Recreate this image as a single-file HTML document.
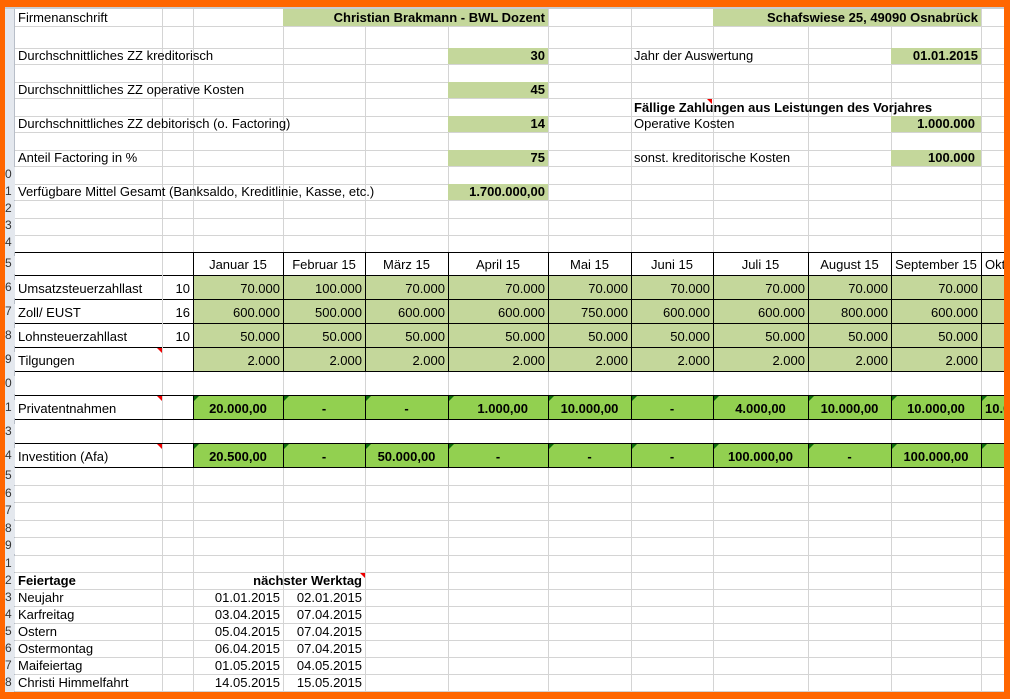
<!DOCTYPE html>
<html><head><meta charset="utf-8"><style>
*{margin:0;padding:0;box-sizing:border-box}
body{width:1010px;height:699px;overflow:hidden;background:#fff;position:relative;font-family:"Liberation Sans",Arial,sans-serif;font-size:13px;color:#000}
.v{position:absolute;width:1px;background:#d4d4d4;top:9px;height:683px}
.h{position:absolute;height:1px;background:#d4d4d4;left:15px;width:990px}
.bh{position:absolute;height:1px;background:#000;left:15px;width:990px}
.bv{position:absolute;width:1px;background:#000}
.c{position:absolute;white-space:nowrap;overflow:hidden;padding:0 3px;display:flex;align-items:flex-end;padding-bottom:1px}
.r{justify-content:flex-end}
.m{justify-content:center}
.b{font-weight:bold}
.g{background:#c4d79b}
.gg{background:#92d050}
.rn{position:absolute;left:5px;width:10px;background:#e4e8ee;font-size:12px;color:#333;overflow:hidden;text-align:left;padding-left:0}
.red{position:absolute;width:0;height:0;border-top:5px solid #e00;border-left:5px solid transparent}
.grn{position:absolute;width:0;height:0;border-top:5px solid #0a6a0a;border-right:5px solid transparent}
.o{position:absolute;background:#ff6600}
</style></head><body>
<!-- row header column -->
<div style="position:absolute;left:5px;top:7px;width:10px;height:686px;background:#e4e8ee;border-right:1px solid #b8bec8"></div>
<div style="position:absolute;left:5px;top:7px;width:1000px;height:2px;background:#c8ccd2"></div>
<!-- vertical gridlines -->
<div class="v" style="left:162px"></div><div class="v" style="left:193px"></div><div class="v" style="left:283px"></div><div class="v" style="left:365px"></div><div class="v" style="left:448px"></div><div class="v" style="left:548px"></div><div class="v" style="left:631px"></div><div class="v" style="left:713px"></div><div class="v" style="left:808px"></div><div class="v" style="left:891px"></div><div class="v" style="left:981px"></div>
<!-- horizontal gridlines -->
<div class="h" style="top:26px"></div><div class="h" style="top:48px"></div><div class="h" style="top:64px"></div><div class="h" style="top:82px"></div><div class="h" style="top:98px"></div><div class="h" style="top:116px"></div><div class="h" style="top:132px"></div><div class="h" style="top:150px"></div><div class="h" style="top:166px"></div><div class="h" style="top:184px"></div><div class="h" style="top:200px"></div><div class="h" style="top:218px"></div><div class="h" style="top:235px"></div><div class="h" style="top:485px"></div><div class="h" style="top:502px"></div><div class="h" style="top:520px"></div><div class="h" style="top:537px"></div><div class="h" style="top:555px"></div><div class="h" style="top:572px"></div><div class="h" style="top:589px"></div><div class="h" style="top:606px"></div><div class="h" style="top:623px"></div><div class="h" style="top:640px"></div><div class="h" style="top:657px"></div><div class="h" style="top:674px"></div><div class="h" style="top:691px"></div>

<!-- row numbers -->
<div class="rn" style="top:167px;height:17px">0</div><div class="rn" style="top:184px;height:16px">1</div><div class="rn" style="top:201px;height:17px">2</div><div class="rn" style="top:218px;height:17px">3</div><div class="rn" style="top:235px;height:17px">4</div>
<div class="rn" style="top:256px;height:18px">5</div><div class="rn" style="top:280px;height:18px">6</div><div class="rn" style="top:304px;height:18px">7</div><div class="rn" style="top:328px;height:18px">8</div><div class="rn" style="top:352px;height:18px">9</div><div class="rn" style="top:376px;height:18px">0</div><div class="rn" style="top:400px;height:18px">1</div><div class="rn" style="top:424px;height:18px">3</div><div class="rn" style="top:448px;height:18px">4</div>
<div class="rn" style="top:468px;height:17px">5</div><div class="rn" style="top:486px;height:16px">6</div><div class="rn" style="top:503px;height:16px">7</div><div class="rn" style="top:521px;height:16px">8</div><div class="rn" style="top:538px;height:16px">9</div><div class="rn" style="top:556px;height:16px">1</div><div class="rn" style="top:573px;height:16px">2</div><div class="rn" style="top:590px;height:16px">3</div><div class="rn" style="top:607px;height:16px">4</div><div class="rn" style="top:624px;height:16px">5</div><div class="rn" style="top:641px;height:16px">6</div><div class="rn" style="top:658px;height:16px">7</div><div class="rn" style="top:675px;height:16px">8</div>

<!-- top section -->
<div class="c" style="left:15px;top:9px;width:200px;height:17px">Firmenanschrift</div>
<div class="c g r b" style="left:283px;top:9px;width:265px;height:17px">Christian Brakmann - BWL Dozent</div>
<div class="c g r b" style="left:713px;top:9px;width:268px;height:17px">Schafswiese 25, 49090 Osnabrück</div>

<div class="c" style="left:15px;top:48px;width:300px;height:16px">Durchschnittliches ZZ kreditorisch</div>
<div class="c g r b" style="left:448px;top:48px;width:100px;height:16px">30</div>
<div class="c" style="left:631px;top:48px;width:200px;height:16px">Jahr der Auswertung</div>
<div class="c g r b" style="left:891px;top:48px;width:90px;height:16px">01.01.2015</div>

<div class="c" style="left:15px;top:82px;width:300px;height:16px">Durchschnittliches ZZ operative Kosten</div>
<div class="c g r b" style="left:448px;top:82px;width:100px;height:16px">45</div>
<div class="c b" style="left:631px;top:98px;width:350px;height:18px">Fällige Zahlungen aus Leistungen des Vorjahres</div>
<div class="red" style="left:707px;top:99px"></div>

<div class="c" style="left:15px;top:116px;width:340px;height:16px">Durchschnittliches ZZ debitorisch (o. Factoring)</div>
<div class="c g r b" style="left:448px;top:116px;width:100px;height:16px">14</div>
<div class="c" style="left:631px;top:116px;width:200px;height:16px">Operative Kosten</div>
<div class="c g r b" style="left:891px;top:116px;width:90px;height:16px;padding-right:6px">1.000.000</div>

<div class="c" style="left:15px;top:150px;width:300px;height:16px">Anteil Factoring in %</div>
<div class="c g r b" style="left:448px;top:150px;width:100px;height:16px">75</div>
<div class="c" style="left:631px;top:150px;width:250px;height:16px">sonst. kreditorische Kosten</div>
<div class="c g r b" style="left:891px;top:150px;width:90px;height:16px;padding-right:6px">100.000</div>

<div class="c" style="left:15px;top:184px;width:433px;height:16px">Verfügbare Mittel Gesamt (Banksaldo, Kreditlinie, Kasse, etc.)</div>
<div class="c g r b" style="left:448px;top:184px;width:100px;height:16px">1.700.000,00</div>

<!-- green fills table -->
<div class="g" style="position:absolute;left:193px;top:275px;width:812px;height:96px"></div>
<div class="gg" style="position:absolute;left:193px;top:395px;width:812px;height:24px"></div>
<div class="gg" style="position:absolute;left:193px;top:443px;width:812px;height:24px"></div>
<div style="position:absolute;left:15px;top:371px;width:990px;height:24px;background:#fff"></div>
<div style="position:absolute;left:15px;top:419px;width:990px;height:24px;background:#fff"></div>
<div style="position:absolute;left:15px;top:252px;width:178px;height:0"></div>
<div class="v" style="left:162px;top:371px;height:24px"></div><div class="v" style="left:193px;top:371px;height:24px"></div><div class="v" style="left:283px;top:371px;height:24px"></div><div class="v" style="left:365px;top:371px;height:24px"></div><div class="v" style="left:448px;top:371px;height:24px"></div><div class="v" style="left:548px;top:371px;height:24px"></div><div class="v" style="left:631px;top:371px;height:24px"></div><div class="v" style="left:713px;top:371px;height:24px"></div><div class="v" style="left:808px;top:371px;height:24px"></div><div class="v" style="left:891px;top:371px;height:24px"></div><div class="v" style="left:981px;top:371px;height:24px"></div>
<div class="v" style="left:162px;top:419px;height:24px"></div><div class="v" style="left:193px;top:419px;height:24px"></div><div class="v" style="left:283px;top:419px;height:24px"></div><div class="v" style="left:365px;top:419px;height:24px"></div><div class="v" style="left:448px;top:419px;height:24px"></div><div class="v" style="left:548px;top:419px;height:24px"></div><div class="v" style="left:631px;top:419px;height:24px"></div><div class="v" style="left:713px;top:419px;height:24px"></div><div class="v" style="left:808px;top:419px;height:24px"></div><div class="v" style="left:891px;top:419px;height:24px"></div><div class="v" style="left:981px;top:419px;height:24px"></div>
<div style="position:absolute;left:16px;top:253px;width:177px;height:22px;background:#fff"></div>
<!-- black lines -->
<div class="bh" style="top:252px"></div><div class="bh" style="top:275px"></div><div class="bh" style="top:299px"></div><div class="bh" style="top:323px"></div><div class="bh" style="top:347px"></div><div class="bh" style="top:371px"></div><div class="bh" style="top:395px"></div><div class="bh" style="top:419px"></div><div class="bh" style="top:443px"></div><div class="bh" style="top:467px"></div>
<div class="bv" style="left:193px;top:252px;height:119px"></div><div class="bv" style="left:283px;top:252px;height:119px"></div><div class="bv" style="left:365px;top:252px;height:119px"></div><div class="bv" style="left:448px;top:252px;height:119px"></div><div class="bv" style="left:548px;top:252px;height:119px"></div><div class="bv" style="left:631px;top:252px;height:119px"></div><div class="bv" style="left:713px;top:252px;height:119px"></div><div class="bv" style="left:808px;top:252px;height:119px"></div><div class="bv" style="left:891px;top:252px;height:119px"></div><div class="bv" style="left:981px;top:252px;height:119px"></div>
<div class="bv" style="left:193px;top:395px;height:24px"></div><div class="bv" style="left:283px;top:395px;height:24px"></div><div class="bv" style="left:365px;top:395px;height:24px"></div><div class="bv" style="left:448px;top:395px;height:24px"></div><div class="bv" style="left:548px;top:395px;height:24px"></div><div class="bv" style="left:631px;top:395px;height:24px"></div><div class="bv" style="left:713px;top:395px;height:24px"></div><div class="bv" style="left:808px;top:395px;height:24px"></div><div class="bv" style="left:891px;top:395px;height:24px"></div><div class="bv" style="left:981px;top:395px;height:24px"></div>
<div class="bv" style="left:193px;top:443px;height:24px"></div><div class="bv" style="left:283px;top:443px;height:24px"></div><div class="bv" style="left:365px;top:443px;height:24px"></div><div class="bv" style="left:448px;top:443px;height:24px"></div><div class="bv" style="left:548px;top:443px;height:24px"></div><div class="bv" style="left:631px;top:443px;height:24px"></div><div class="bv" style="left:713px;top:443px;height:24px"></div><div class="bv" style="left:808px;top:443px;height:24px"></div><div class="bv" style="left:891px;top:443px;height:24px"></div><div class="bv" style="left:981px;top:443px;height:24px"></div>
<div class="v" style="left:162px;top:253px;height:118px"></div>

<!-- header months -->
<div class="c m" style="left:193px;top:253px;width:90px;height:22px;padding-bottom:3px">Januar 15</div>
<div class="c m" style="left:283px;top:253px;width:82px;height:22px;padding-bottom:3px">Februar 15</div>
<div class="c m" style="left:365px;top:253px;width:83px;height:22px;padding-bottom:3px">März 15</div>
<div class="c m" style="left:448px;top:253px;width:100px;height:22px;padding-bottom:3px">April 15</div>
<div class="c m" style="left:548px;top:253px;width:83px;height:22px;padding-bottom:3px">Mai 15</div>
<div class="c m" style="left:631px;top:253px;width:82px;height:22px;padding-bottom:3px">Juni 15</div>
<div class="c m" style="left:713px;top:253px;width:95px;height:22px;padding-bottom:3px">Juli 15</div>
<div class="c m" style="left:808px;top:253px;width:83px;height:22px;padding-bottom:3px">August 15</div>
<div class="c m" style="left:891px;top:253px;width:90px;height:22px;padding-bottom:3px">September 15</div>
<div class="c" style="left:982px;top:253px;width:22px;height:22px;padding-bottom:3px">Oktober</div>

<!-- data rows -->
<div class="c" style="left:15px;top:276px;width:147px;height:23px;padding-bottom:3px">Umsatzsteuerzahllast</div><div class="c r" style="left:162px;top:276px;width:31px;height:23px;padding-bottom:3px">10</div>
<div class="c" style="left:15px;top:300px;width:147px;height:23px;padding-bottom:3px">Zoll/ EUST</div><div class="c r" style="left:162px;top:300px;width:31px;height:23px;padding-bottom:3px">16</div>
<div class="c" style="left:15px;top:324px;width:147px;height:23px;padding-bottom:3px">Lohnsteuerzahllast</div><div class="c r" style="left:162px;top:324px;width:31px;height:23px;padding-bottom:3px">10</div>
<div class="c" style="left:15px;top:348px;width:147px;height:23px;padding-bottom:3px">Tilgungen</div>
<div class="red" style="left:157px;top:348px"></div>

<div class="c r" style="left:193px;top:276px;width:90px;height:23px;padding-bottom:3px">70.000</div><div class="c r" style="left:283px;top:276px;width:82px;height:23px;padding-bottom:3px">100.000</div><div class="c r" style="left:365px;top:276px;width:83px;height:23px;padding-bottom:3px">70.000</div><div class="c r" style="left:448px;top:276px;width:100px;height:23px;padding-bottom:3px">70.000</div><div class="c r" style="left:548px;top:276px;width:83px;height:23px;padding-bottom:3px">70.000</div><div class="c r" style="left:631px;top:276px;width:82px;height:23px;padding-bottom:3px">70.000</div><div class="c r" style="left:713px;top:276px;width:95px;height:23px;padding-bottom:3px">70.000</div><div class="c r" style="left:808px;top:276px;width:83px;height:23px;padding-bottom:3px">70.000</div><div class="c r" style="left:891px;top:276px;width:90px;height:23px;padding-bottom:3px">70.000</div>
<div class="c r" style="left:193px;top:300px;width:90px;height:23px;padding-bottom:3px">600.000</div><div class="c r" style="left:283px;top:300px;width:82px;height:23px;padding-bottom:3px">500.000</div><div class="c r" style="left:365px;top:300px;width:83px;height:23px;padding-bottom:3px">600.000</div><div class="c r" style="left:448px;top:300px;width:100px;height:23px;padding-bottom:3px">600.000</div><div class="c r" style="left:548px;top:300px;width:83px;height:23px;padding-bottom:3px">750.000</div><div class="c r" style="left:631px;top:300px;width:82px;height:23px;padding-bottom:3px">600.000</div><div class="c r" style="left:713px;top:300px;width:95px;height:23px;padding-bottom:3px">600.000</div><div class="c r" style="left:808px;top:300px;width:83px;height:23px;padding-bottom:3px">800.000</div><div class="c r" style="left:891px;top:300px;width:90px;height:23px;padding-bottom:3px">600.000</div>
<div class="c r" style="left:193px;top:324px;width:90px;height:23px;padding-bottom:3px">50.000</div><div class="c r" style="left:283px;top:324px;width:82px;height:23px;padding-bottom:3px">50.000</div><div class="c r" style="left:365px;top:324px;width:83px;height:23px;padding-bottom:3px">50.000</div><div class="c r" style="left:448px;top:324px;width:100px;height:23px;padding-bottom:3px">50.000</div><div class="c r" style="left:548px;top:324px;width:83px;height:23px;padding-bottom:3px">50.000</div><div class="c r" style="left:631px;top:324px;width:82px;height:23px;padding-bottom:3px">50.000</div><div class="c r" style="left:713px;top:324px;width:95px;height:23px;padding-bottom:3px">50.000</div><div class="c r" style="left:808px;top:324px;width:83px;height:23px;padding-bottom:3px">50.000</div><div class="c r" style="left:891px;top:324px;width:90px;height:23px;padding-bottom:3px">50.000</div>
<div class="c r" style="left:193px;top:348px;width:90px;height:23px;padding-bottom:3px">2.000</div><div class="c r" style="left:283px;top:348px;width:82px;height:23px;padding-bottom:3px">2.000</div><div class="c r" style="left:365px;top:348px;width:83px;height:23px;padding-bottom:3px">2.000</div><div class="c r" style="left:448px;top:348px;width:100px;height:23px;padding-bottom:3px">2.000</div><div class="c r" style="left:548px;top:348px;width:83px;height:23px;padding-bottom:3px">2.000</div><div class="c r" style="left:631px;top:348px;width:82px;height:23px;padding-bottom:3px">2.000</div><div class="c r" style="left:713px;top:348px;width:95px;height:23px;padding-bottom:3px">2.000</div><div class="c r" style="left:808px;top:348px;width:83px;height:23px;padding-bottom:3px">2.000</div><div class="c r" style="left:891px;top:348px;width:90px;height:23px;padding-bottom:3px">2.000</div>

<!-- Privatentnahmen -->
<div class="c" style="left:15px;top:396px;width:147px;height:23px;padding-bottom:3px">Privatentnahmen</div>
<div class="red" style="left:157px;top:396px"></div>
<div class="c m b" style="left:193px;top:396px;width:90px;height:23px;padding-bottom:3px">20.000,00</div><div class="c m b" style="left:283px;top:396px;width:82px;height:23px;padding-bottom:3px">-</div><div class="c m b" style="left:365px;top:396px;width:83px;height:23px;padding-bottom:3px">-</div><div class="c r b" style="left:448px;top:396px;width:100px;height:23px;padding-bottom:3px;padding-right:20px">1.000,00</div><div class="c m b" style="left:548px;top:396px;width:83px;height:23px;padding-bottom:3px">10.000,00</div><div class="c m b" style="left:631px;top:396px;width:82px;height:23px;padding-bottom:3px">-</div><div class="c m b" style="left:713px;top:396px;width:95px;height:23px;padding-bottom:3px">4.000,00</div><div class="c m b" style="left:808px;top:396px;width:83px;height:23px;padding-bottom:3px">10.000,00</div><div class="c m b" style="left:891px;top:396px;width:90px;height:23px;padding-bottom:3px">10.000,00</div><div class="c b" style="left:982px;top:396px;width:22px;height:23px;padding-bottom:3px">10.000</div>
<div class="grn" style="left:284px;top:396px"></div><div class="grn" style="left:366px;top:396px"></div><div class="grn" style="left:449px;top:396px"></div><div class="grn" style="left:549px;top:396px"></div><div class="grn" style="left:632px;top:396px"></div><div class="grn" style="left:714px;top:396px"></div><div class="grn" style="left:809px;top:396px"></div><div class="grn" style="left:892px;top:396px"></div><div class="grn" style="left:982px;top:396px"></div><div class="grn" style="left:194px;top:396px"></div>

<!-- Investition -->
<div class="c" style="left:15px;top:444px;width:147px;height:23px;padding-bottom:3px">Investition (Afa)</div>
<div class="red" style="left:157px;top:444px"></div>
<div class="c m b" style="left:193px;top:444px;width:90px;height:23px;padding-bottom:3px">20.500,00</div><div class="c m b" style="left:283px;top:444px;width:82px;height:23px;padding-bottom:3px">-</div><div class="c m b" style="left:365px;top:444px;width:83px;height:23px;padding-bottom:3px">50.000,00</div><div class="c m b" style="left:448px;top:444px;width:100px;height:23px;padding-bottom:3px">-</div><div class="c m b" style="left:548px;top:444px;width:83px;height:23px;padding-bottom:3px">-</div><div class="c m b" style="left:631px;top:444px;width:82px;height:23px;padding-bottom:3px">-</div><div class="c m b" style="left:713px;top:444px;width:95px;height:23px;padding-bottom:3px">100.000,00</div><div class="c m b" style="left:808px;top:444px;width:83px;height:23px;padding-bottom:3px">-</div><div class="c m b" style="left:891px;top:444px;width:90px;height:23px;padding-bottom:3px">100.000,00</div>
<div class="grn" style="left:284px;top:444px"></div><div class="grn" style="left:366px;top:444px"></div><div class="grn" style="left:449px;top:444px"></div><div class="grn" style="left:549px;top:444px"></div><div class="grn" style="left:632px;top:444px"></div><div class="grn" style="left:714px;top:444px"></div><div class="grn" style="left:809px;top:444px"></div><div class="grn" style="left:892px;top:444px"></div><div class="grn" style="left:982px;top:444px"></div><div class="grn" style="left:194px;top:444px"></div>

<!-- Feiertage -->
<div class="c b" style="left:15px;top:572px;width:147px;height:17px">Feiertage</div>
<div class="c r b" style="left:193px;top:572px;width:172px;height:17px">nächster Werktag</div>
<div class="red" style="left:360px;top:573px"></div>
<div class="c" style="left:15px;top:589px;width:178px;height:17px">Neujahr</div><div class="c r" style="left:193px;top:589px;width:90px;height:17px">01.01.2015</div><div class="c r" style="left:283px;top:589px;width:82px;height:17px">02.01.2015</div>
<div class="c" style="left:15px;top:606px;width:178px;height:17px">Karfreitag</div><div class="c r" style="left:193px;top:606px;width:90px;height:17px">03.04.2015</div><div class="c r" style="left:283px;top:606px;width:82px;height:17px">07.04.2015</div>
<div class="c" style="left:15px;top:623px;width:178px;height:17px">Ostern</div><div class="c r" style="left:193px;top:623px;width:90px;height:17px">05.04.2015</div><div class="c r" style="left:283px;top:623px;width:82px;height:17px">07.04.2015</div>
<div class="c" style="left:15px;top:640px;width:178px;height:17px">Ostermontag</div><div class="c r" style="left:193px;top:640px;width:90px;height:17px">06.04.2015</div><div class="c r" style="left:283px;top:640px;width:82px;height:17px">07.04.2015</div>
<div class="c" style="left:15px;top:657px;width:178px;height:17px">Maifeiertag</div><div class="c r" style="left:193px;top:657px;width:90px;height:17px">01.05.2015</div><div class="c r" style="left:283px;top:657px;width:82px;height:17px">04.05.2015</div>
<div class="c" style="left:15px;top:674px;width:178px;height:17px">Christi Himmelfahrt</div><div class="c r" style="left:193px;top:674px;width:90px;height:17px">14.05.2015</div><div class="c r" style="left:283px;top:674px;width:82px;height:17px">15.05.2015</div>

<!-- orange frame -->
<div class="o" style="left:0;top:0;width:1010px;height:7px"></div>
<div class="o" style="left:0;top:0;width:5px;height:699px"></div>
<div class="o" style="left:1004px;top:0;width:6px;height:699px"></div>
<div class="o" style="left:0;top:692px;width:1010px;height:7px"></div>
</body></html>
